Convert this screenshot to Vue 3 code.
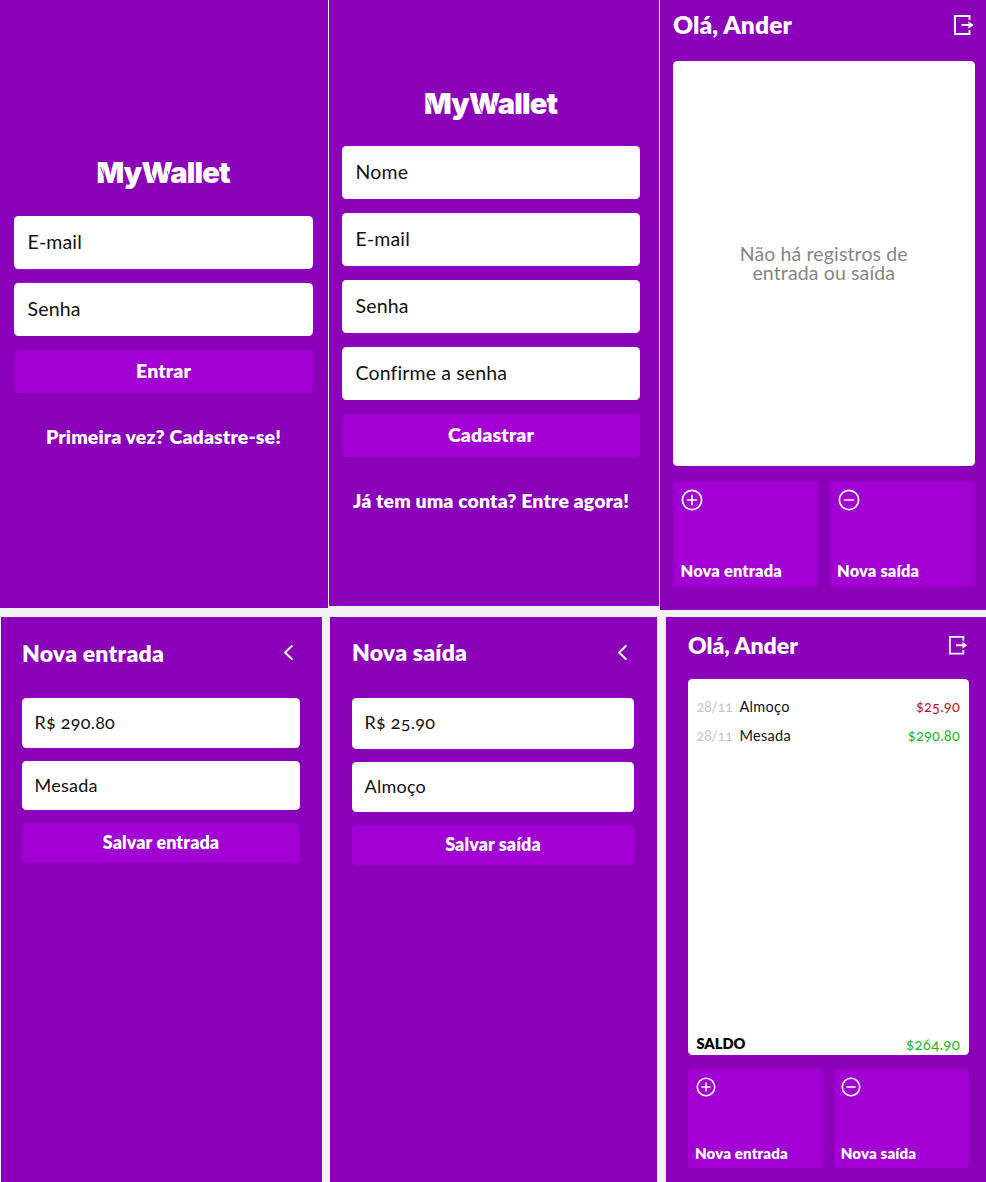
<script setup>
const authScreens = [
  {
    id: 'login',
    fields: ['E-mail', 'Senha'],
    action: 'Entrar',
    link: 'Primeira vez? Cadastre-se!',
  },
  {
    id: 'signup',
    fields: ['Nome', 'E-mail', 'Senha', 'Confirme a senha'],
    action: 'Cadastrar',
    link: 'Já tem uma conta? Entre agora!',
  },
]

const formScreens = [
  { id: 'income', title: 'Nova entrada', fields: ['R$ 290.80', 'Mesada'], action: 'Salvar entrada' },
  { id: 'expense', title: 'Nova saída', fields: ['R$ 25.90', 'Almoço'], action: 'Salvar saída' },
]

const records = [
  { date: '28/11', name: 'Almoço', value: '$25.90', type: 'out' },
  { date: '28/11', name: 'Mesada', value: '$290.80', type: 'in' },
]
</script>

<template>
  <main class="board">
    <section class="row top">
      <article v-for="s in authScreens" :key="s.id" class="screen auth" :class="s.id">
        <h1 class="logo">
          MyWallet
          <svg class="cuts" viewBox="0 0 134 30" aria-hidden="true">
            <path d="M3.5 8L9 22M53.5 12L57.5 23M70 12L73.5 23" />
          </svg>
        </h1>
        <div class="fields">
          <div v-for="f in s.fields" :key="f" class="field">{{ f }}</div>
          <div class="submit">{{ s.action }}</div>
        </div>
        <p class="link">{{ s.link }}</p>
      </article>

      <article class="screen home empty">
        <header class="head">
          <h2>Olá, Ander</h2>
          <svg class="exit" viewBox="0 0 20 20">
            <path d="M15.5 5V1H1v18h14.5v-4M7.5 10h9" />
            <path class="tip" d="M14.5 6.2L19.6 10l-5.1 3.8z" />
          </svg>
        </header>
        <div class="card"><p class="none">Não há registros de<br />entrada ou saída</p></div>
        <nav class="tiles">
          <div class="tile">
            <svg class="round" viewBox="0 0 22 22"><circle cx="11" cy="11" r="9.6" /><path d="M6.5 11h9M11 6.5v9" /></svg>
            <span>Nova entrada</span>
          </div>
          <div class="tile">
            <svg class="round" viewBox="0 0 22 22"><circle cx="11" cy="11" r="9.6" /><path d="M6.5 11h9" /></svg>
            <span>Nova saída</span>
          </div>
        </nav>
      </article>
    </section>

    <section class="row bottom">
      <article v-for="s in formScreens" :key="s.id" class="screen form" :class="s.id">
        <header class="head">
          <h2>{{ s.title }}</h2>
          <svg class="back" viewBox="0 0 10 15"><path d="M8.8 1L2 7.5 8.8 14" /></svg>
        </header>
        <div class="fields">
          <div v-for="f in s.fields" :key="f" class="field">{{ f }}</div>
          <div class="submit">{{ s.action }}</div>
        </div>
      </article>

      <article class="screen home filled">
        <header class="head">
          <h2>Olá, Ander</h2>
          <svg class="exit" viewBox="0 0 20 20">
            <path d="M15.5 5V1H1v18h14.5v-4M7.5 10h9" />
            <path class="tip" d="M14.5 6.2L19.6 10l-5.1 3.8z" />
          </svg>
        </header>
        <div class="card">
          <ul class="records">
            <li v-for="r in records" :key="r.name">
              <span class="date">{{ r.date }}</span>
              <span class="name">{{ r.name }}</span>
              <span class="value" :class="r.type">{{ r.value }}</span>
            </li>
          </ul>
          <div class="balance"><strong>SALDO</strong><span class="value in">$264.90</span></div>
        </div>
        <nav class="tiles">
          <div class="tile">
            <svg class="round" viewBox="0 0 22 22"><circle cx="11" cy="11" r="9.6" /><path d="M6.5 11h9M11 6.5v9" /></svg>
            <span>Nova entrada</span>
          </div>
          <div class="tile">
            <svg class="round" viewBox="0 0 22 22"><circle cx="11" cy="11" r="9.6" /><path d="M6.5 11h9" /></svg>
            <span>Nova saída</span>
          </div>
        </nav>
      </article>
    </section>
  </main>
</template>

<style>
body {
  margin: 0;
  background: #f3f3f6;
}
</style>

<style scoped>
* {
  box-sizing: border-box;
  margin: 0;
  padding: 0;
}
.board {
  width: 986px;
  height: 1182px;
  overflow: hidden;
  background: #f3f3f6;
  font-family: Lato, 'Open Sans', sans-serif;
  font-variant-numeric: oldstyle-nums;
  color: #fff;
}
.row {
  display: flex;
  align-items: flex-start;
}
.top {
  height: 617px;
  gap: 1px;
}
.bottom {
  height: 565px;
  padding-left: 1px;
}
.screen {
  flex: none;
  background: #8b00b9;
}
.login { width: 328px; height: 608px; padding: 155px 15px 0 14px; }
.signup { width: 330px; height: 606px; padding: 86px 19px 0 13px; }
.empty { width: 326px; height: 610px; padding: 0 11.5px 0 13px; }
.income { width: 321px; height: 565px; padding: 0 22px 0 21px; margin-right: 8px; }
.expense { width: 327px; height: 565px; padding: 0 23px 0 22px; margin-right: 9px; }
.filled { width: 320px; height: 565px; padding: 0 17.5px 0 22px; }

.logo {
  position: relative;
  width: 134px;
  height: 36px;
  margin: 0 auto;
  line-height: 36px;
  font-family: Inter, sans-serif;
  font-size: 29px;
  font-weight: 900;
  letter-spacing: -0.8px;
  white-space: nowrap;
}
.cuts {
  position: absolute;
  left: 0;
  top: 4px;
  width: 134px;
  height: 30px;
  fill: none;
  stroke: #8b00b9;
  stroke-width: 0.8;
}
.fields {
  display: flex;
  flex-direction: column;
  gap: 14px;
}
.auth .fields { margin-top: 24.6px; }
.signup .fields { margin-top: 24px; }
.field {
  height: 53px;
  padding-left: 13.6px;
  border-radius: 4.5px;
  background: #fff;
  color: #111;
  font-size: 19.5px;
  line-height: 51px;
  letter-spacing: 0.13px;
}
.submit {
  height: 43px;
  border-radius: 4.5px;
  background: #a200d3;
  font-size: 19.5px;
  font-weight: 800;
  line-height: 42px;
  letter-spacing: 0.1px;
  text-align: center;
}
.link {
  margin: 32.5px -10px 0;
  font-size: 19.5px;
  font-weight: 800;
  line-height: 24px;
  letter-spacing: 0.1px;
  text-align: center;
  white-space: nowrap;
}
.signup .field { height: 52.9px; }
.signup .submit { line-height: 41px; }
.signup .link { margin-top: 32px; }

.head {
  display: flex;
  align-items: center;
  justify-content: space-between;
}
h2 {
  font-size: 24.6px;
  font-weight: 800;
  line-height: 30px;
  letter-spacing: 0.1px;
}
svg {
  display: block;
  flex: none;
}
.exit {
  width: 20px;
  height: 20px;
  margin-right: 0.8px;
  fill: none;
  stroke: #fff;
  stroke-width: 1.9;
}
.exit .tip {
  fill: #fff;
  stroke: none;
}
.empty .head { height: 61px; padding-bottom: 11px; }
.card {
  border-radius: 4.5px;
  background: #fff;
}
.empty .card {
  display: flex;
  align-items: center;
  justify-content: center;
  height: 405px;
}
.none {
  color: #868686;
  font-size: 19.5px;
  line-height: 18.4px;
  letter-spacing: 0.13px;
  text-align: center;
}
.tiles {
  display: flex;
  gap: 11.5px;
  margin-top: 14.5px;
}
.tile {
  display: flex;
  flex: 1;
  flex-direction: column;
  justify-content: space-between;
  height: 106px;
  padding: 8px 7px 7px 8px;
  border-radius: 4.5px;
  background: #a200d3;
  font-size: 16.4px;
  font-weight: 800;
  line-height: 18px;
  letter-spacing: 0.16px;
}
.tile span { margin-left: -0.5px; }
.round {
  width: 22px;
  height: 22px;
  fill: none;
  stroke: #fff;
  stroke-width: 1.7;
  stroke-linecap: round;
}

.form .head { height: 81px; padding: 0 7px 10px 0; }
.expense .head { padding-bottom: 11px; }
.form h2,
.filled h2 { font-size: 23px; }
.form h2 { letter-spacing: 0.2px; }
.filled h2 { letter-spacing: -0.05px; }
.back {
  width: 10px;
  height: 15px;
  fill: none;
  stroke: #fff;
  stroke-width: 1.9;
  stroke-linecap: round;
  stroke-linejoin: round;
}
.form .fields { gap: 13px; }
.form .field {
  height: 49.5px;
  padding-left: 12.6px;
  font-size: 18px;
  line-height: 48.5px;
  letter-spacing: 0.22px;
}
.form .submit {
  height: 39.5px;
  font-size: 17.9px;
  line-height: 39px;
}
.form.expense .field { height: 50.5px; line-height: 49px; }
.form.expense .submit { height: 40px; }

.filled .head { height: 62px; padding-bottom: 5.5px; }
.filled .exit { width: 18.5px; height: 18.5px; }
.filled .card {
  display: flex;
  flex-direction: column;
  justify-content: space-between;
  height: 376px;
  padding: 18px 8.5px 1.5px;
}
.records { list-style: none; }
.records li {
  display: flex;
  height: 29.3px;
  font-size: 14.5px;
  line-height: 19px;
  letter-spacing: 0.3px;
}
.date {
  width: 43px;
  color: #c6c6c6;
  letter-spacing: -0.4px;
}
.name { color: #111; }
.value { margin-left: auto; letter-spacing: 0.25px; }
.out { color: #c0141f; }
.in { color: #1fb52a; }
.balance {
  display: flex;
  line-height: 20px;
  font-size: 15px;
}
.balance strong { color: #000; font-size: 14.6px; font-weight: 800; }
.filled .tiles { gap: 11px; margin-top: 14px; }
.filled .tile {
  height: 98.5px;
  padding: 8px 7px 6px 7.5px;
  font-size: 15px;
}
.filled .round { width: 20px; height: 20px; }
</style>
